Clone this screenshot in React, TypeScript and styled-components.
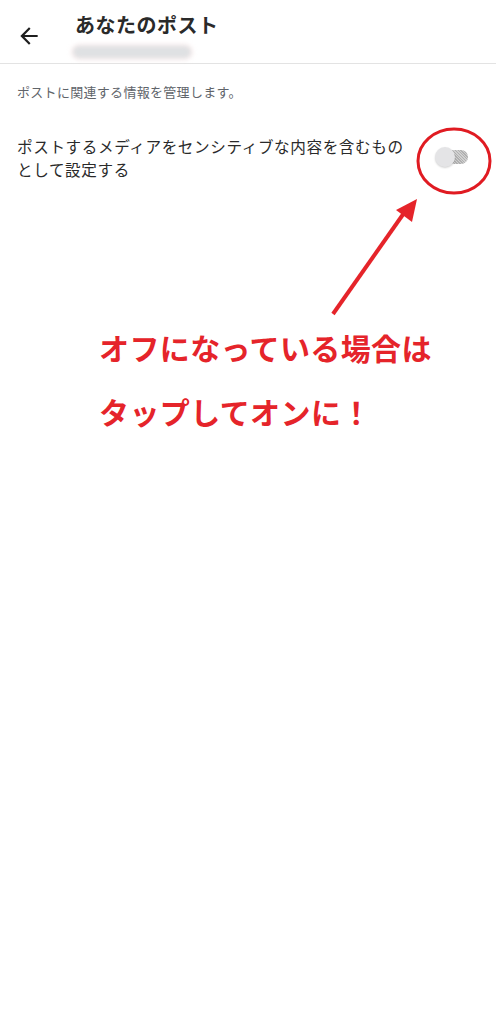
import React from 'react';
import styled, { createGlobalStyle } from 'styled-components';

const GlobalStyle = createGlobalStyle`
    body {
        margin: 0;
        background: #fff;
        font-family: Roboto, "Noto Sans CJK JP", sans-serif;
    }
`;

const Page = styled.div`
    position: relative;
    width: 496px;
    min-height: 1024px;
    background: #fff;
    color: #1f1f1f;
`;

const Header = styled.header`
    display: flex;
    align-items: flex-start;
    height: 64px;
    border-bottom: 1px solid #e3e3e3;
    box-sizing: border-box;
`;

const BackButton = styled.button`
    width: 56px;
    height: 56px;
    margin-top: 8px;
    padding: 0 0 0 16px;
    border: none;
    background: none;
    display: flex;
    align-items: center;
    color: #1f1f1f;
`;

const TitleBlock = styled.div`
    display: flex;
    flex-direction: column;
    padding-top: 12px;
    margin-left: 19px;
`;

const Title = styled.h1`
    margin: 0;
    font-size: 20px;
    line-height: 28px;
    font-weight: 700;
    letter-spacing: 0.5px;
    color: #2a2a2a;
`;

const BlurredName = styled.div`
    width: 118px;
    height: 12px;
    margin-top: 6px;
    margin-left: -2px;
    border-radius: 8px;
    background: #dfe1e3;
    filter: blur(2px);
    box-shadow: 0 0 3px 1px #f5dede;
`;

const Description = styled.p`
    margin: 18px 0 0 17px;
    font-size: 13px;
    line-height: 22px;
    color: #60646a;
    letter-spacing: 0.3px;
`;

const SettingRow = styled.div`
    display: flex;
    align-items: center;
    justify-content: space-between;
    margin-top: 33px;
    padding: 0 28px 0 17px;
`;

const SettingLabel = styled.div`
    width: 400px;
    font-size: 15.6px;
    line-height: 23px;
    letter-spacing: 0.6px;
    color: #2a2a2a;
`;

const Switch = styled.div`
    position: relative;
    width: 28px;
    height: 14px;
    margin-top: -6px;
    border-radius: 7px;
    background: repeating-linear-gradient(45deg, #b0b0b0 0 1px, #d0d0d0 1px 2px);
`;

const Thumb = styled.span`
    position: absolute;
    left: -5px;
    top: -3px;
    width: 20px;
    height: 20px;
    border-radius: 50%;
    background: #e4e4e6;
    box-shadow: 0 1px 2px rgba(0, 0, 0, 0.18);
`;

const Callout = styled.div`
    margin: 147px 0 0 99px;
    display: flex;
    flex-direction: column;
    gap: 24px;
`;

const CalloutLine = styled.div`
    font-size: 30px;
    line-height: 40px;
    font-weight: 700;
    color: #e5242a;
    letter-spacing: 0.4px;
`;

const Annotation = styled.svg`
    position: absolute;
    left: 0;
    top: 0;
    pointer-events: none;
`;

const App = () => {
    return (
        <Page>
            <GlobalStyle />
            <Header>
                <BackButton aria-label="戻る">
                    <svg width="26" height="26" viewBox="0 0 24 24">
                        <path
                            d="M20 11H7.83l5.59-5.59L12 4l-8 8 8 8 1.41-1.41L7.83 13H20v-2z"
                            fill="currentColor"
                        />
                    </svg>
                </BackButton>
                <TitleBlock>
                    <Title>あなたのポスト</Title>
                    <BlurredName />
                </TitleBlock>
            </Header>
            <Description>ポストに関連する情報を管理します。</Description>
            <SettingRow>
                <SettingLabel>
                    ポストするメディアをセンシティブな内容を含むもの
                    <br />
                    として設定する
                </SettingLabel>
                <Switch>
                    <Thumb />
                </Switch>
            </SettingRow>
            <Callout>
                <CalloutLine>オフになっている場合は</CalloutLine>
                <CalloutLine>タップしてオンに！</CalloutLine>
            </Callout>
            <Annotation width="496" height="340" viewBox="0 0 496 340">
                <ellipse cx="454" cy="161" rx="36" ry="32" fill="none" stroke="#e01b22" strokeWidth="3" />
                <line x1="333" y1="314" x2="404" y2="213" stroke="#e5242a" strokeWidth="4" />
                <polygon points="417,199 396,210 412,222" fill="#e5242a" />
            </Annotation>
        </Page>
    );
};

export default App;
